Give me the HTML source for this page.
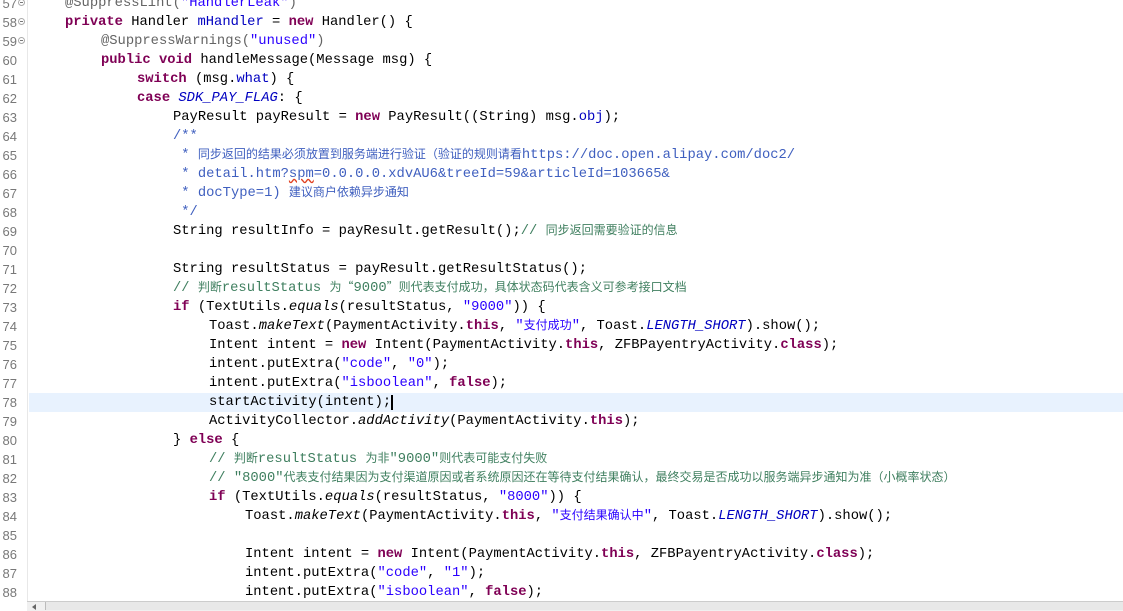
<!DOCTYPE html>
<html><head><meta charset="utf-8"><style>
body{margin:0;width:1123px;height:610px;overflow:hidden;background:#fff;position:relative;font-family:"Liberation Mono","Noto Sans CJK SC",monospace;}
.g{position:absolute;left:0;top:0;width:27px;height:610px;background:#fff;border-right:1px solid #e8e8e8}
.l{position:absolute;left:0;height:19px;line-height:19px;white-space:pre;font-size:13.8px;color:#000;width:1123px;overflow:hidden}
.n{position:absolute;left:0;width:17px;text-align:right;color:#787878;font-size:13px;font-family:"Liberation Sans",sans-serif}
.f{position:absolute;left:18px;top:5px;width:7px;height:7px;border:1px solid #aaa;border-radius:50%;box-sizing:border-box}
.f:after{content:"";position:absolute;left:1px;top:2px;width:3px;height:1px;background:#777}
.c{position:absolute;top:0;line-height:19px;height:19px}
.k{color:#7f0055;font-weight:bold}.s{color:#2a00ff}.fd{color:#0000c0}.i{font-style:italic}.fi{color:#0000c0;font-style:italic}
.j{color:#3f5fbf}.cm{color:#3f7f5f}.a{color:#646464}
.z{font-size:12px;font-family:"Noto Sans CJK SC",sans-serif;line-height:0;vertical-align:baseline}
.hl{background:#e8f2fe}
</style></head><body>
<div class="g"></div>
<div class="l" style="top:-6px"><span class="n">57</span><span class="f"></span><span class="c" style="left:65px"><span class="a">@SuppressLint(</span><span class="s">"HandlerLeak"</span><span class="a">)</span></span></div>
<div class="l" style="top:13px"><span class="n">58</span><span class="f"></span><span class="c" style="left:65px"><span class="k">private</span> Handler <span class="fd">mHandler</span> = <span class="k">new</span> Handler() {</span></div>
<div class="l" style="top:32px"><span class="n">59</span><span class="f"></span><span class="c" style="left:101px"><span class="a">@SuppressWarnings(</span><span class="s">"unused"</span><span class="a">)</span></span></div>
<div class="l" style="top:51px"><span class="n">60</span><span class="c" style="left:101px"><span class="k">public</span> <span class="k">void</span> handleMessage(Message msg) {</span></div>
<div class="l" style="top:70px"><span class="n">61</span><span class="c" style="left:137px"><span class="k">switch</span> (msg.<span class="fd">what</span>) {</span></div>
<div class="l" style="top:89px"><span class="n">62</span><span class="c" style="left:137px"><span class="k">case</span> <span class="fi">SDK_PAY_FLAG</span>: {</span></div>
<div class="l" style="top:108px"><span class="n">63</span><span class="c" style="left:173px">PayResult payResult = <span class="k">new</span> PayResult((String) msg.<span class="fd">obj</span>);</span></div>
<div class="l" style="top:127px"><span class="n">64</span><span class="c" style="left:173px"><span class="j">/**</span></span></div>
<div class="l" style="top:146px"><span class="n">65</span><span class="c" style="left:173px"><span class="j"> * <span class="z">同步返回的结果必须放置到服务端进行验证（验证的规则请看</span>https://doc.open.alipay.com/doc2/</span></span></div>
<div class="l" style="top:165px"><span class="n">66</span><span class="c" style="left:173px"><span class="j"> * detail.htm?<span style="text-decoration:underline wavy #e04020">spm</span>=0.0.0.0.xdvAU6&amp;treeId=59&amp;articleId=103665&amp;</span></span></div>
<div class="l" style="top:184px"><span class="n">67</span><span class="c" style="left:173px"><span class="j"> * docType=1) <span class="z">建议商户依赖异步通知</span></span></span></div>
<div class="l" style="top:203px"><span class="n">68</span><span class="c" style="left:173px"><span class="j"> */</span></span></div>
<div class="l" style="top:222px"><span class="n">69</span><span class="c" style="left:173px">String resultInfo = payResult.getResult();<span class="cm">// <span class="z">同步返回需要验证的信息</span></span></span></div>
<div class="l" style="top:241px"><span class="n">70</span></div>
<div class="l" style="top:260px"><span class="n">71</span><span class="c" style="left:173px">String resultStatus = payResult.getResultStatus();</span></div>
<div class="l" style="top:279px"><span class="n">72</span><span class="c" style="left:173px"><span class="cm">// <span class="z">判断</span>resultStatus <span class="z">为“</span>9000<span class="z">”则代表支付成功，具体状态码代表含义可参考接口文档</span></span></span></div>
<div class="l" style="top:298px"><span class="n">73</span><span class="c" style="left:173px"><span class="k">if</span> (TextUtils.<span class="i">equals</span>(resultStatus, <span class="s">"9000"</span>)) {</span></div>
<div class="l" style="top:317px"><span class="n">74</span><span class="c" style="left:209px">Toast.<span class="i">makeText</span>(PaymentActivity.<span class="k">this</span>, <span class="s">"<span class="z">支付成功</span>"</span>, Toast.<span class="fi">LENGTH_SHORT</span>).show();</span></div>
<div class="l" style="top:336px"><span class="n">75</span><span class="c" style="left:209px">Intent intent = <span class="k">new</span> Intent(PaymentActivity.<span class="k">this</span>, ZFBPayentryActivity.<span class="k">class</span>);</span></div>
<div class="l" style="top:355px"><span class="n">76</span><span class="c" style="left:209px">intent.putExtra(<span class="s">"code"</span>, <span class="s">"0"</span>);</span></div>
<div class="l" style="top:374px"><span class="n">77</span><span class="c" style="left:209px">intent.putExtra(<span class="s">"isboolean"</span>, <span class="k">false</span>);</span></div>
<div class="l hl" style="top:393px;left:29px;width:1094px"></div>
<div class="l" style="top:393px"><span class="n">78</span><span class="c" style="left:209px">startActivity(intent);<span style="border-left:2px solid #000;margin-left:0"></span></span></div>
<div class="l" style="top:412px"><span class="n">79</span><span class="c" style="left:209px">ActivityCollector.<span class="i">addActivity</span>(PaymentActivity.<span class="k">this</span>);</span></div>
<div class="l" style="top:431px"><span class="n">80</span><span class="c" style="left:173px">} <span class="k">else</span> {</span></div>
<div class="l" style="top:450px"><span class="n">81</span><span class="c" style="left:209px"><span class="cm">// <span class="z">判断</span>resultStatus <span class="z">为非</span>"9000"<span class="z">则代表可能支付失败</span></span></span></div>
<div class="l" style="top:469px"><span class="n">82</span><span class="c" style="left:209px"><span class="cm">// "8000"<span class="z">代表支付结果因为支付渠道原因或者系统原因还在等待支付结果确认，最终交易是否成功以服务端异步通知为准（小概率状态）</span></span></span></div>
<div class="l" style="top:488px"><span class="n">83</span><span class="c" style="left:209px"><span class="k">if</span> (TextUtils.<span class="i">equals</span>(resultStatus, <span class="s">"8000"</span>)) {</span></div>
<div class="l" style="top:507px"><span class="n">84</span><span class="c" style="left:245px">Toast.<span class="i">makeText</span>(PaymentActivity.<span class="k">this</span>, <span class="s">"<span class="z">支付结果确认中</span>"</span>, Toast.<span class="fi">LENGTH_SHORT</span>).show();</span></div>
<div class="l" style="top:526px"><span class="n">85</span></div>
<div class="l" style="top:545px"><span class="n">86</span><span class="c" style="left:245px">Intent intent = <span class="k">new</span> Intent(PaymentActivity.<span class="k">this</span>, ZFBPayentryActivity.<span class="k">class</span>);</span></div>
<div class="l" style="top:564px"><span class="n">87</span><span class="c" style="left:245px">intent.putExtra(<span class="s">"code"</span>, <span class="s">"1"</span>);</span></div>
<div class="l" style="top:583px"><span class="n">88</span><span class="c" style="left:245px">intent.putExtra(<span class="s">"isboolean"</span>, <span class="k">false</span>);</span></div>
<div style="position:absolute;left:27px;top:601px;width:1096px;height:9px;background:#f0f0f0;border-top:1px solid #ccc"></div>
<div style="position:absolute;left:45px;top:602px;width:1078px;height:8px;background:#e8e8e8;border-left:1px solid #bbb"></div>
<div style="position:absolute;left:32px;top:604px;width:0;height:0;border-right:4px solid #666;border-top:3px solid transparent;border-bottom:3px solid transparent"></div>
</body></html>
